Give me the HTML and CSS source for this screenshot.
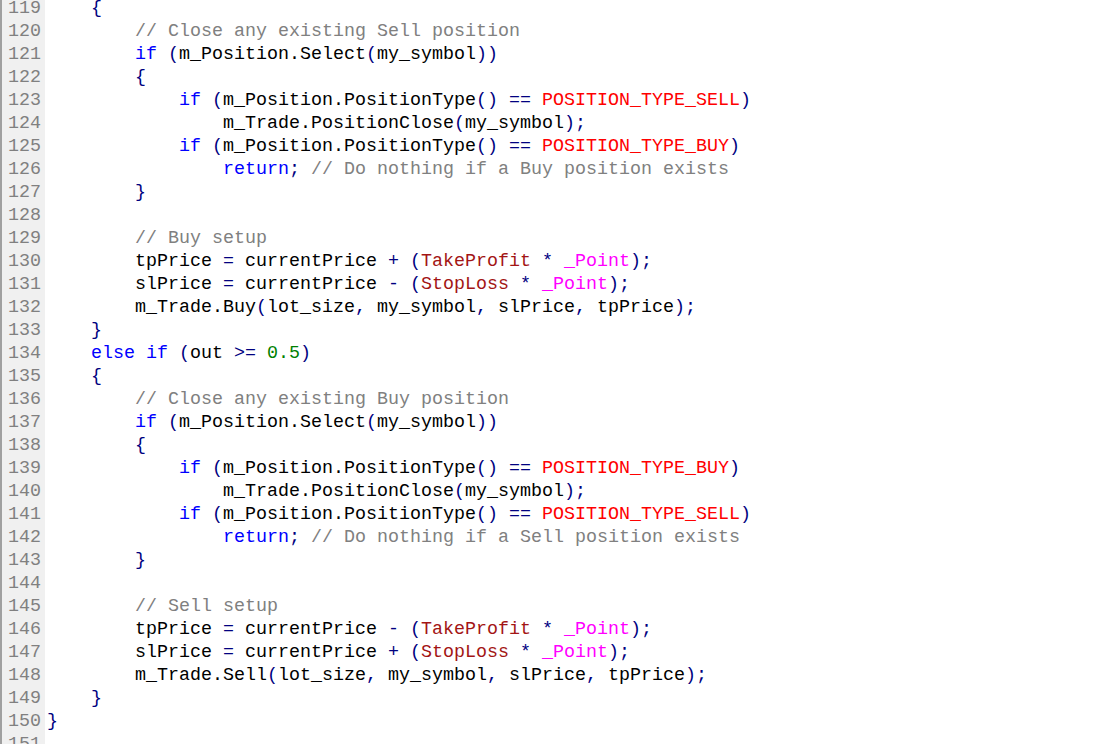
FILE: index.html
```html
<!DOCTYPE html>
<html>
<head>
<meta charset="utf-8">
<title>Editor</title>
<link rel="stylesheet" href="styles.css">
</head>
<body>
<div class="editor">
<div class="gutter"><div>119</div><div>120</div><div>121</div><div>122</div><div>123</div><div>124</div><div>125</div><div>126</div><div>127</div><div>128</div><div>129</div><div>130</div><div>131</div><div>132</div><div>133</div><div>134</div><div>135</div><div>136</div><div>137</div><div>138</div><div>139</div><div>140</div><div>141</div><div>142</div><div>143</div><div>144</div><div>145</div><div>146</div><div>147</div><div>148</div><div>149</div><div>150</div><div>151</div></div>
<pre class="code"><span class="p">    {</span>
        <span class="c">// Close any existing Sell position</span>
        <span class="k">if</span> <span class="p">(</span>m_Position.Select<span class="p">(</span>my_symbol<span class="p">))</span>
<span class="p">        {</span>
            <span class="k">if</span> <span class="p">(</span>m_Position.PositionType<span class="p">()</span> <span class="p">==</span> <span class="r">POSITION_TYPE_SELL</span><span class="p">)</span>
                m_Trade.PositionClose<span class="p">(</span>my_symbol<span class="p">);</span>
            <span class="k">if</span> <span class="p">(</span>m_Position.PositionType<span class="p">()</span> <span class="p">==</span> <span class="r">POSITION_TYPE_BUY</span><span class="p">)</span>
                <span class="k">return</span><span class="p">;</span> <span class="c">// Do nothing if a Buy position exists</span>
<span class="p">        }</span>

        <span class="c">// Buy setup</span>
        tpPrice <span class="p">=</span> currentPrice <span class="p">+</span> <span class="p">(</span><span class="i">TakeProfit</span> <span class="p">*</span> <span class="m">_Point</span><span class="p">);</span>
        slPrice <span class="p">=</span> currentPrice <span class="p">-</span> <span class="p">(</span><span class="i">StopLoss</span> <span class="p">*</span> <span class="m">_Point</span><span class="p">);</span>
        m_Trade.Buy<span class="p">(</span>lot_size<span class="p">,</span> my_symbol<span class="p">,</span> slPrice<span class="p">,</span> tpPrice<span class="p">);</span>
<span class="p">    }</span>
    <span class="k">else</span> <span class="k">if</span> <span class="p">(</span>out <span class="p">&gt;=</span> <span class="n">0.5</span><span class="p">)</span>
<span class="p">    {</span>
        <span class="c">// Close any existing Buy position</span>
        <span class="k">if</span> <span class="p">(</span>m_Position.Select<span class="p">(</span>my_symbol<span class="p">))</span>
<span class="p">        {</span>
            <span class="k">if</span> <span class="p">(</span>m_Position.PositionType<span class="p">()</span> <span class="p">==</span> <span class="r">POSITION_TYPE_BUY</span><span class="p">)</span>
                m_Trade.PositionClose<span class="p">(</span>my_symbol<span class="p">);</span>
            <span class="k">if</span> <span class="p">(</span>m_Position.PositionType<span class="p">()</span> <span class="p">==</span> <span class="r">POSITION_TYPE_SELL</span><span class="p">)</span>
                <span class="k">return</span><span class="p">;</span> <span class="c">// Do nothing if a Sell position exists</span>
<span class="p">        }</span>

        <span class="c">// Sell setup</span>
        tpPrice <span class="p">=</span> currentPrice <span class="p">-</span> <span class="p">(</span><span class="i">TakeProfit</span> <span class="p">*</span> <span class="m">_Point</span><span class="p">);</span>
        slPrice <span class="p">=</span> currentPrice <span class="p">+</span> <span class="p">(</span><span class="i">StopLoss</span> <span class="p">*</span> <span class="m">_Point</span><span class="p">);</span>
        m_Trade.Sell<span class="p">(</span>lot_size<span class="p">,</span> my_symbol<span class="p">,</span> slPrice<span class="p">,</span> tpPrice<span class="p">);</span>
<span class="p">    }</span>
<span class="p">}</span>
</pre>
</div>
</body>
</html>
```
FILE: styles.css
```css
html, body {
  margin: 0;
  padding: 0;
  background: #ffffff;
  overflow: hidden;
  height: 100%;
}
.editor {
  display: flex;
  margin-top: -3px;
  font-family: "Liberation Mono", "DejaVu Sans Mono", monospace;
  font-size: 18.333px;
  line-height: 23px;
  min-height: 760px;
}
.gutter {
  width: 39px;
  flex: 0 0 39px;
  background: #f0f0f0;
  border-left: 2px solid #a0a0a0;
  padding-right: 4px;
  text-align: right;
  color: #808080;
}
.code {
  margin: 0;
  padding-left: 2px;
  font: inherit;
  line-height: 23px;
  color: #000000;
  white-space: pre;
}
.p { color: #000080; }
.k { color: #0000ff; }
.c { color: #808080; }
.r { color: #ff0000; }
.i { color: #a31515; }
.m { color: #ff00ff; }
.n { color: #008000; }
```
